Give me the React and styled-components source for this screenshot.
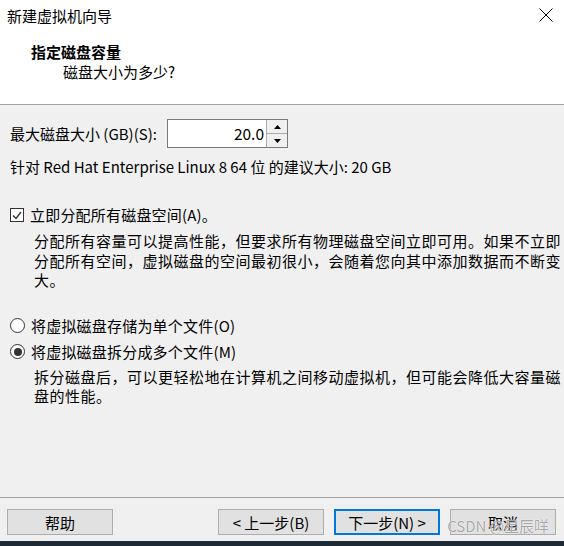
import React from "react";
import styled, { createGlobalStyle } from "styled-components";

const Global = createGlobalStyle`
  html, body {
    margin: 0;
    padding: 0;
    background: #f0f0f0;
  }
  * {
    box-sizing: border-box;
  }
`;

const FONT = `"Noto Sans CJK SC", "Noto Sans", "Liberation Sans", sans-serif`;

// STYLED COMPONENTS -start

const Window = styled.div`
  width: 564px;
  height: 546px;
  display: flex;
  flex-direction: column;
  background: #f0f0f0;
  font-family: ${FONT};
  font-size: 15px;
  color: #000;
  overflow: hidden;
`;

const Top = styled.div`
  background: #fff;
  border-bottom: 1px solid #a0a0a0;
  padding-bottom: 22px;
`;

const TitleBar = styled.div`
  height: 30px;
  display: flex;
  align-items: center;
  justify-content: space-between;
  padding: 0 11px 0 7px;
  font-size: 15px;
`;

const Heading = styled.div`
  margin-top: 12px;
  padding-left: 31px;
  line-height: 20px;
  font-weight: 700;
`;

const SubHeading = styled.div`
  padding-left: 63px;
  line-height: 20px;
`;

const Body = styled.div`
  flex: 1;
  padding: 14px 10px 0 10px;
  display: flex;
  flex-direction: column;
`;

const SpinRow = styled.div`
  display: flex;
  align-items: center;
  height: 29px;
`;

const SpinLabel = styled.span`
  width: 157px;
  white-space: nowrap;
`;

const SpinBox = styled.div`
  display: flex;
  width: 121px;
  height: 29px;
  border: 1px solid #7a7a7a;
  background: #fff;
`;

const SpinValue = styled.div`
  flex: 1;
  text-align: right;
  line-height: 27px;
  padding-right: 2px;
  font-size: 15.5px;
`;

const SpinButtons = styled.div`
  width: 21px;
  display: flex;
  flex-direction: column;
  border-left: 1px solid #adadad;
`;

const SpinBtn = styled.div`
  flex: 1;
  display: flex;
  align-items: center;
  justify-content: center;
  background: #f0f0f0;
  border-bottom: ${(p) => (p.$top ? "1px solid #adadad" : "none")};
`;

const Line = styled.div`
  line-height: 20px;
  margin-top: ${(p) => p.$mt || 0}px;
  white-space: nowrap;
`;

const Desc = styled.div`
  margin: ${(p) => p.$mt || 0}px 0 0 24px;
  line-height: 19.5px;
  letter-spacing: 0.5px;
  white-space: nowrap;
`;

const Option = styled.div`
  display: flex;
  align-items: center;
  gap: 6px;
  line-height: 20px;
  margin-top: ${(p) => p.$mt || 0}px;
  letter-spacing: 0.2px;
`;

const CheckBox = styled.span`
  width: 14px;
  height: 14px;
  border: 1px solid #333;
  background: #fff;
  display: inline-flex;
  align-items: center;
  justify-content: center;
`;

const Radio = styled.span`
  width: 15px;
  height: 15px;
  border-radius: 50%;
  border: 1px solid #333;
  background: #fff;
  display: inline-flex;
  align-items: center;
  justify-content: center;
  &::after {
    content: "";
    width: 8px;
    height: 8px;
    border-radius: 50%;
    background: #333;
    display: ${(p) => (p.$checked ? "block" : "none")};
  }
`;

const Footer = styled.div`
  position: relative;
  border-top: 1px solid #a0a0a0;
  height: 44px;
  padding: 11px 8px 0 7px;
  display: flex;
  gap: 10px;
`;

const Button = styled.div`
  width: 106px;
  height: 26px;
  display: flex;
  align-items: center;
  justify-content: center;
  background: #e1e1e1;
  border: ${(p) => (p.$default ? "2px solid #0078d7" : "1px solid #adadad")};
  font-size: 15px;
  margin-left: ${(p) => (p.$push ? "auto" : "0")};
`;

const Watermark = styled.div`
  position: absolute;
  right: 15px;
  bottom: 5px;
  font-size: 15px;
  color: rgba(150, 150, 150, 0.85);
  text-shadow: 0 0 1px #fff, 0 0 1px #fff;
  pointer-events: none;
`;

const Strip = styled.div`
  height: 5px;
  background: #1f2a37;
`;

// STYLED COMPONENTS -end

const CloseIcon = () => (
  <svg width="14" height="14" viewBox="0 0 14 14">
    <path d="M0.5 0.5 L13.5 13.5 M13.5 0.5 L0.5 13.5" stroke="#000" strokeWidth="1" />
  </svg>
);

const Arrow = ({ up }) => (
  <svg width="7" height="4" viewBox="0 0 7 4">
    <path d={up ? "M0 4 L3.5 0 L7 4 Z" : "M0 0 L7 0 L3.5 4 Z"} fill="#000" />
  </svg>
);

const Tick = () => (
  <svg width="10" height="9" viewBox="0 0 10 9">
    <path d="M1 4.5 L4 7.5 L9 1" stroke="#333" strokeWidth="1.4" fill="none" />
  </svg>
);

const App = () => {
  return (
    <Window>
      <Global />
      <Top>
        <TitleBar>
          <span>新建虚拟机向导</span>
          <CloseIcon />
        </TitleBar>
        <Heading>指定磁盘容量</Heading>
        <SubHeading>磁盘大小为多少?</SubHeading>
      </Top>
      <Body>
        <SpinRow>
          <SpinLabel>最大磁盘大小 (GB)(S):</SpinLabel>
          <SpinBox>
            <SpinValue>20.0</SpinValue>
            <SpinButtons>
              <SpinBtn $top>
                <Arrow up />
              </SpinBtn>
              <SpinBtn>
                <Arrow />
              </SpinBtn>
            </SpinButtons>
          </SpinBox>
        </SpinRow>
        <Line $mt={9}>针对 Red Hat Enterprise Linux 8 64 位 的建议大小: 20 GB</Line>
        <Option $mt={28}>
          <CheckBox>
            <Tick />
          </CheckBox>
          <span>立即分配所有磁盘空间(A)。</span>
        </Option>
        <Desc $mt={6}>
          分配所有容量可以提高性能，但要求所有物理磁盘空间立即可用。如果不立即
          <br />
          分配所有空间，虚拟磁盘的空间最初很小，会随着您向其中添加数据而不断变
          <br />
          大。
        </Desc>
        <Option $mt={26}>
          <Radio />
          <span>将虚拟磁盘存储为单个文件(O)</span>
        </Option>
        <Option $mt={6}>
          <Radio $checked />
          <span>将虚拟磁盘拆分成多个文件(M)</span>
        </Option>
        <Desc $mt={5}>
          拆分磁盘后，可以更轻松地在计算机之间移动虚拟机，但可能会降低大容量磁
          <br />
          盘的性能。
        </Desc>
      </Body>
      <Footer>
        <Button>帮助</Button>
        <Button $push>&lt; 上一步(B)</Button>
        <Button $default>下一步(N) &gt;</Button>
        <Button>取消</Button>
        <Watermark>CSDN @星辰咩</Watermark>
      </Footer>
      <Strip />
    </Window>
  );
};

export default App;
